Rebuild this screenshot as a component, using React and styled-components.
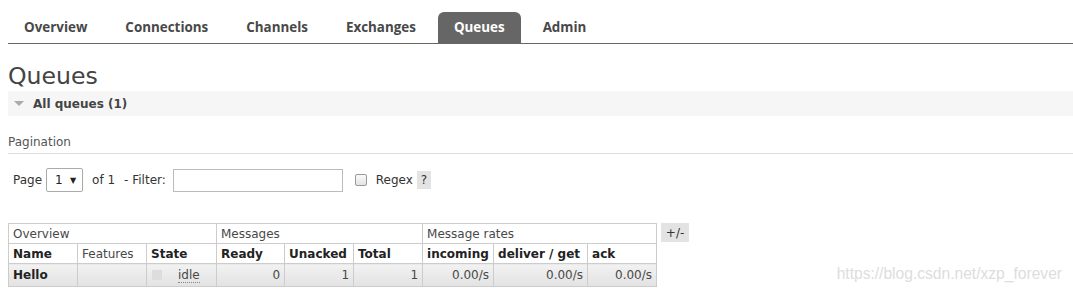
import React from "react";
import styled, { createGlobalStyle } from "styled-components";

const text = "#484848";
const border = "#ccc";
const verdana = `"DejaVu Sans", Verdana, sans-serif`;

const GlobalStyle = createGlobalStyle`
  html, body {
    margin: 0;
    padding: 0;
    background: #fff;
  }
  body {
    font-family: ${verdana};
    font-size: 12px;
    color: ${text};
  }
`;

const tabs = ["Overview", "Connections", "Channels", "Exchanges", "Queues", "Admin"];

const columns = [
  { key: "name", label: "Name", width: 69 },
  { key: "features", label: "Features", width: 69, plain: true },
  { key: "state", label: "State", width: 70 },
  { key: "ready", label: "Ready", width: 68 },
  { key: "unacked", label: "Unacked", width: 69 },
  { key: "total", label: "Total", width: 69 },
  { key: "incoming", label: "incoming", width: 71 },
  { key: "deliver", label: "deliver / get", width: 94 },
  { key: "ack", label: "ack", width: 69 },
];

export default function App() {
  return (
    <Page>
      <GlobalStyle />
      <Nav>
        {tabs.map((t) => (
          <Tab key={t} $active={t === "Queues"}>
            {t}
          </Tab>
        ))}
      </Nav>

      <Title>Queues</Title>
      <SectionBar>
        <Arrow />
        <SectionTitle>All queues (1)</SectionTitle>
      </SectionBar>

      <SubTitle>Pagination</SubTitle>
      <FilterRow>
        <Label>Page</Label>
        <Select>
          <span>1</span>
          <SelectArrow>▼</SelectArrow>
        </Select>
        <Label $gap={9}>of 1</Label>
        <Label $gap={9}>- Filter:</Label>
        <FilterInput />
        <Checkbox />
        <Label $gap={9}>Regex</Label>
        <Help>?</Help>
      </FilterRow>

      <TableRow>
        <Table>
          <colgroup>
            {columns.map((c) => (
              <Col key={c.key} $w={c.width} />
            ))}
          </colgroup>
          <thead>
            <tr>
              <GroupTh colSpan={3}>Overview</GroupTh>
              <GroupTh colSpan={3}>Messages</GroupTh>
              <GroupTh colSpan={3}>Message rates</GroupTh>
            </tr>
            <tr>
              {columns.map((c) => (
                <Th key={c.key} $plain={c.plain}>
                  {c.label}
                </Th>
              ))}
            </tr>
          </thead>
          <tbody>
            <tr>
              <Td $bold>Hello</Td>
              <Td />
              <Td>
                <StateCell>
                  <StateBox />
                  <Abbr>idle</Abbr>
                </StateCell>
              </Td>
              <Td $num>0</Td>
              <Td $num>1</Td>
              <Td $num>1</Td>
              <Td $num>0.00/s</Td>
              <Td $num>0.00/s</Td>
              <Td $num>0.00/s</Td>
            </tr>
          </tbody>
        </Table>
        <Toggle>+/-</Toggle>
      </TableRow>

      <Watermark>https://blog.csdn.net/xzp_forever</Watermark>
    </Page>
  );
}

const Page = styled.div`
  position: relative;
  width: 1073px;
  height: 295px;
  padding-left: 8px;
  box-sizing: border-box;
  overflow: hidden;
`;

const Nav = styled.ul`
  display: flex;
  gap: 6px;
  margin: 0;
  padding: 12px 0 0;
  list-style: none;
  border-bottom: 1px solid #666;
`;

const Tab = styled.li`
  height: 31px;
  line-height: 31px;
  padding: 0 16px;
  font-family: "Open Sans", sans-serif;
  font-weight: 700;
  font-size: 13.4px;
  border-radius: 6px 6px 0 0;
  color: ${(p) => (p.$active ? "#fff" : text)};
  background: ${(p) => (p.$active ? "#666" : "transparent")};
`;

const Title = styled.h1`
  margin: 18px 0 0;
  font-size: 23.6px;
  font-weight: normal;
  line-height: 29px;
  color: #444;
`;

const SectionBar = styled.div`
  display: flex;
  align-items: center;
  height: 25px;
  background: #f6f6f6;
  padding-left: 6px;
`;

const Arrow = styled.span`
  width: 0;
  height: 0;
  border-left: 5px solid transparent;
  border-right: 5px solid transparent;
  border-top: 5px solid #aaa;
  margin-right: 9px;
`;

const SectionTitle = styled.h2`
  margin: 0;
  font-size: 12px;
  font-weight: bold;
  color: #444;
`;

const SubTitle = styled.h3`
  margin: 19px 0 0;
  padding-bottom: 4px;
  font-size: 12px;
  font-weight: normal;
  color: #555;
  border-bottom: 1px solid #ddd;
`;

const FilterRow = styled.div`
  display: flex;
  align-items: center;
  height: 24px;
  margin-top: 14px;
  padding-left: 5px;
`;

const Label = styled.span`
  margin-left: ${(p) => p.$gap || 0}px;
  color: #333;
`;

const Select = styled.div`
  display: flex;
  align-items: center;
  justify-content: space-between;
  box-sizing: border-box;
  width: 37px;
  height: 24px;
  margin-left: 4px;
  padding: 0 6px 0 8px;
  border: 1px solid #aaa;
  border-radius: 2px;
  color: #222;
`;

const SelectArrow = styled.span`
  font-size: 8px;
`;

const FilterInput = styled.div`
  box-sizing: border-box;
  width: 170px;
  height: 23px;
  margin-left: 7px;
  border: 1px solid #bbb;
  background: #fff;
`;

const Checkbox = styled.span`
  box-sizing: border-box;
  width: 12px;
  height: 12px;
  margin-left: 12px;
  border: 1px solid #999;
  border-radius: 2px;
  background: linear-gradient(#fafafa, #e4e4e4);
`;

const Help = styled.span`
  margin-left: 4px;
  padding: 2px 4px;
  background: #e3e3e3;
  color: #333;
`;

const TableRow = styled.div`
  display: flex;
  align-items: flex-start;
  gap: 4px;
  margin-top: 31px;
`;

const Table = styled.table`
  border-collapse: collapse;
  table-layout: fixed;
  width: 649px;
`;

const Col = styled.col`
  width: ${(p) => p.$w}px;
`;

const cell = `
  border: 1px solid ${border};
  padding: 0 4px;
  height: 19px;
  white-space: nowrap;
  overflow: hidden;
  text-align: left;
`;

const GroupTh = styled.th`
  ${cell}
  font-weight: normal;
  color: ${text};
`;

const Th = styled.th`
  ${cell}
  font-weight: ${(p) => (p.$plain ? "normal" : "bold")};
  color: ${(p) => (p.$plain ? text : "#222")};
`;

const Td = styled.td`
  ${cell}
  height: 22px;
  background: linear-gradient(#f2f2f2, #e2e2e2);
  text-align: ${(p) => (p.$num ? "right" : "left")};
  font-weight: ${(p) => (p.$bold ? "bold" : "normal")};
  color: ${(p) => (p.$bold ? "#222" : text)};
`;

const StateCell = styled.div`
  display: flex;
  align-items: center;
  gap: 16px;
  padding-left: 1px;
`;

const StateBox = styled.span`
  width: 10px;
  height: 10px;
  background: #ddd;
`;

const Abbr = styled.abbr`
  text-decoration: none;
  border-bottom: 1px dotted #888;
  line-height: 14px;
`;

const Toggle = styled.span`
  display: flex;
  align-items: center;
  justify-content: center;
  width: 28px;
  height: 19px;
  background: #e3e3e3;
  color: #333;
`;

const Watermark = styled.div`
  position: absolute;
  right: 11px;
  bottom: 12px;
  font-family: "Liberation Sans", Arial, sans-serif;
  font-size: 15.6px;
  color: #ddd;
`;
